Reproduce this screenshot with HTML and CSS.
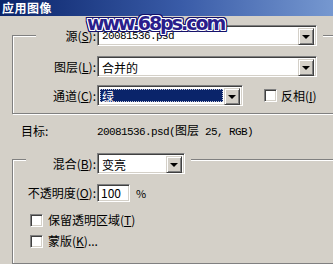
FILE: index.html
```html
<!DOCTYPE html>
<html lang="zh-CN">
<head>
  <meta charset="UTF-8">
  <title>应用图像</title>
  <link rel="stylesheet" href="styles.css">
</head>
<body>

  <div class="titlebar">应用图像</div>
  <div class="watermark">www.68ps.com</div>

  <!-- 源 -->
  <div class="group group-source">
    <div class="group-head">
      <span class="label">源(<u>S</u>):</span>
      <div class="select select-wide">
        <span class="value mono">20081536.psd</span>
        <span class="arrow-btn"><i></i></span>
      </div>
    </div>
    <div class="row row-layer">
      <span class="label">图层(<u>L</u>):</span>
      <div class="select select-wide">
        <span class="value">合并的</span>
        <span class="arrow-btn"><i></i></span>
      </div>
    </div>
    <div class="row row-channel">
      <span class="label">通道(<u>C</u>):</span>
      <div class="select select-channel focused">
        <span class="value">绿</span>
        <span class="arrow-btn"><i></i></span>
      </div>
      <label class="check check-invert"><span class="box"></span>反相(<u>I</u>)</label>
    </div>
  </div>

  <div class="target">
    <span class="target-label">目标:</span>
    <span class="mono">20081536.psd(<span class="cjk">图层</span> 25, RGB)</span>
  </div>

  <!-- 混合 -->
  <div class="group group-blend">
    <div class="group-head">
      <span class="label">混合(<u>B</u>):</span>
      <div class="select select-blend">
        <span class="value">变亮</span>
        <span class="arrow-btn"><i></i></span>
      </div>
    </div>
    <div class="row row-opacity">
      <span class="label">不透明度(<u>O</u>):</span>
      <div class="field">100</div>
      <span class="unit">%</span>
    </div>
    <label class="check check-first"><span class="box"></span>保留透明区域(<u>T</u>)</label>
    <label class="check check-second"><span class="box"></span>蒙版(<u>K</u>)...</label>
  </div>

</body>
</html>
```

FILE: styles.css
```css
body {
  margin: 0;
  width: 333px;
  height: 264px;
  overflow: hidden;
  position: relative;
  background: #d4d0c8;
  font-family: "Noto Sans CJK SC", sans-serif;
  font-size: 12px;
  line-height: 14px;
  color: #000;
}

u {
  text-decoration: underline;
  text-underline-offset: 1px;
}

.mono {
  font-family: "Liberation Mono", "Noto Sans CJK SC", monospace;
  font-size: 11px;
  letter-spacing: -0.6px;
}

.mono .cjk {
  font-family: "Noto Sans CJK SC", sans-serif;
  font-size: 12px;
  letter-spacing: 0;
}

.titlebar {
  height: 16px;
  padding-left: 2px;
  background: linear-gradient(to right, #0a246a, #3a5ca8 55%, #7698d0);
  color: #fff;
  font-weight: bold;
  font-size: 12px;
  line-height: 16px;
  letter-spacing: 0.5px;
}

/* 水印 */
.watermark {
  position: absolute;
  left: 87px;
  top: 14px;
  font-family: "DejaVu Sans", sans-serif;
  font-weight: bold;
  font-size: 19px;
  line-height: 18px;
  letter-spacing: -2px;
  color: #2a1e8c;
  text-shadow:
    1px 0 0 #fff, -1px 0 0 #fff, 0 1px 0 #fff, 0 -1px 0 #fff,
    1px 1px 0 #fff, -1px -1px 0 #fff, 1px -1px 0 #fff, -1px 1px 0 #fff,
    2px 0 0 #14106a, -2px 0 0 #14106a, 0 2px 0 #14106a, 0 -2px 0 #14106a,
    2px 2px 0 #14106a, -2px -2px 0 #14106a, 2px -2px 0 #14106a, -2px 2px 0 #14106a,
    2px 1px 0 #14106a, -2px 1px 0 #14106a, 1px 2px 0 #14106a, 1px -2px 0 #14106a,
    2px -1px 0 #14106a, -2px -1px 0 #14106a, -1px 2px 0 #14106a, -1px -2px 0 #14106a;
  z-index: 2;
}

/* 分组框 */
.group {
  margin-left: 12px;
  width: 340px;
  border: 1px solid #808080;
  box-shadow: 1px 1px 0 #fff, inset 1px 1px 0 #fff;
}

.group-source {
  margin-top: 19px;
  padding-bottom: 7px;
}

.group-blend {
  margin-top: 20px;
  padding-bottom: 15px;
}

.group-head {
  display: flex;
  align-items: center;
  width: fit-content;
  background: #d4d0c8;
  padding-right: 6px;
}

.group-source .group-head {
  margin: -11px 0 0 23px;
}

.group-source .group-head .label {
  width: 60px;
}

.group-blend .group-head {
  margin: -7px 0 0 13px;
}

.group-blend .group-head .label {
  width: 70px;
}

.row {
  display: flex;
  align-items: center;
}

.label {
  width: 83px;
  margin-right: 1px;
  text-align: right;
  white-space: nowrap;
}

.row-layer {
  margin-top: 10px;
}

.row-channel {
  margin-top: 8px;
}

.row-opacity {
  margin-top: 10px;
}

/* 下拉框 */
.select,
.field,
.box {
  box-sizing: border-box;
  background: #fff;
  border: 1px solid;
  border-color: #808080 #fff #fff #808080;
  box-shadow: inset 1px 1px 0 #404040, inset -1px -1px 0 #d4d0c8;
}

.select {
  display: flex;
  height: 21px;
  padding: 2px;
}

.select-wide {
  width: 220px;
}

.select-channel {
  width: 146px;
}

.select-blend {
  width: 88px;
}

.select .value {
  flex: 1;
  padding-left: 2px;
  line-height: 17px;
  white-space: nowrap;
}

.select .value.mono {
  font-size: 11px;
}

.focused .value {
  margin: 1px 1px 1px 0;
  line-height: 15px;
  background: #0a246a;
  color: #fff;
  outline: 1px dotted #c8c8d8;
  outline-offset: -1px;
}

.arrow-btn {
  box-sizing: border-box;
  width: 16px;
  height: 17px;
  display: flex;
  align-items: center;
  justify-content: center;
  background: #d4d0c8;
  border: 1px solid;
  border-color: #d4d0c8 #404040 #404040 #d4d0c8;
  box-shadow: inset 1px 1px 0 #fff, inset -1px -1px 0 #808080;
}

.arrow-btn i {
  width: 0;
  height: 0;
  border-left: 4px solid transparent;
  border-right: 4px solid transparent;
  border-top: 4px solid #000;
  margin-top: 1px;
}

/* 复选框 */
.check {
  display: flex;
  align-items: center;
  white-space: nowrap;
}

.box {
  width: 13px;
  height: 13px;
  margin-right: 5px;
}

.check-invert {
  margin-left: 21px;
}

.check-invert .box {
  margin-right: 4px;
}

.check-first {
  margin: 11px 0 0 17px;
}

.check-second {
  margin: 7px 0 0 17px;
}

/* 目标 */
.target {
  display: flex;
  align-items: center;
  margin-top: 9px;
  padding-left: 21px;
}

.target-label {
  width: 76px;
}

/* 不透明度 */
.field {
  width: 33px;
  height: 18px;
  padding-left: 3px;
  line-height: 16px;
}

.unit {
  margin-left: 6px;
  font-size: 11px;
}
```
